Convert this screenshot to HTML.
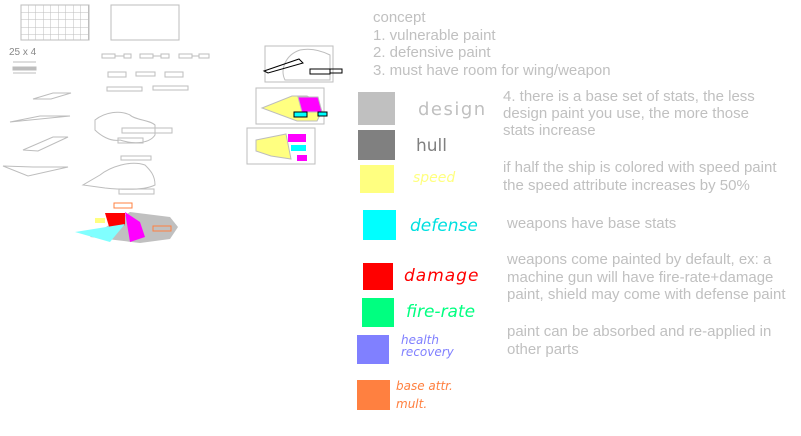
<!DOCTYPE html>
<html><head><meta charset="utf-8"><style>
body{margin:0;width:801px;height:436px;background:#fff;position:relative;overflow:hidden;font-family:"Liberation Sans",sans-serif;}
.t{position:absolute;color:#c0c0c0;font-size:15px;line-height:17.5px;white-space:nowrap}
.s{position:absolute}
.h{position:absolute;font-family:"DejaVu Sans",sans-serif;font-size:17px;font-style:italic;white-space:nowrap}
</style></head><body>
<svg width="801" height="436" style="position:absolute;left:0;top:0" fill="none" stroke="#bdbdbd" stroke-width="1">
<defs><pattern id="g" width="7.5" height="7.5" patternUnits="userSpaceOnUse" x="21" y="5"><path d="M7.5 0V7.5M0 7.5H7.5" stroke="#bdbdbd"/></pattern></defs>
<rect x="21" y="5" width="68" height="35" fill="url(#g)"/>
<rect x="111" y="5" width="68" height="35"/>
<text x="9" y="55" fill="#888" stroke="none" font-size="10" font-family="Liberation Sans">25 x 4</text>
<path d="M13 62h23M13 69h23M13 73h23"/><rect x="13" y="67" width="23" height="3" fill="#bdbdbd"/>
<g><rect x="102" y="54" width="13" height="4"/><rect x="124" y="54" width="7" height="4"/><path d="M115 56h9"/>
<rect x="140" y="54" width="13" height="4"/><rect x="161" y="54" width="8" height="4"/><path d="M153 56h8"/>
<rect x="179" y="54" width="13" height="4"/><rect x="199" y="54" width="10" height="4"/><path d="M192 56h7"/>
<rect x="108" y="72" width="18" height="5"/><rect x="136" y="72" width="19" height="4"/><rect x="165" y="72" width="18" height="5"/>
<rect x="107" y="87" width="35" height="4"/><rect x="153" y="86" width="35" height="4"/></g>
<path d="M33 99l20-6h18l-20 6zM10 122l30-6h30l-50 5zM23 150l30-13h15l-30 14zM3 166l30 1h35l-40 9z"/>
<path d="M95 120c10-8 25-10 35-5 5 5 20 5 25 10v10c-5 8-20 10-35 5-10 2-20-5-25-10zM122 128h50v5h-50zM118 138h25v5h-25z"/>
<path d="M100 175c10-8 30-15 45-10 5 5 10 10 10 20-10 5-30 5-50 3l-22-3zM121 156h30v4h-30zM119 189h35v5h-35z"/>
<rect x="265" y="46" width="68" height="36"/><path d="M285 80c-5-10 0-25 15-30 10-2 20 0 30 5v25z"/>
<rect x="256" y="88" width="68" height="36"/><path d="M262 108l30-12h15l10 5 5 10-5 10h-20z" fill="#ffff80"/>
<path d="M298 97h20l4 15h-20z" fill="#ff00ff"/><rect x="294" y="112" width="13" height="5" fill="#00ffff" stroke="#000"/><rect x="318" y="112" width="9" height="4" fill="#00ffff" stroke="#000"/>
<rect x="247" y="128" width="68" height="36"/><path d="M256 140l30-6 5 25-20-3-15-5z" fill="#ffff80"/>
<path d="M288 134h18v8h-18z" fill="#ff00ff" stroke="none"/><path d="M291 145h15v6h-15z" fill="#00ffff" stroke="none"/><path d="M297 155h10v6h-10z" fill="#ff00ff" stroke="none"/>
<path d="M264 71l35-12 4 4-35 10zM310 69h20v5h-20z" stroke="#000"/><rect x="330" y="69" width="12" height="4" stroke="#000"/>
<path d="M130 212l40 5 8 10-8 12-30 4-50-6z" fill="#c0c0c0" stroke="none"/>
<path d="M105 213h20v12l-15 5z" fill="#ff0000" stroke="none"/><path d="M125 212l15 10 5 15-15 5z" fill="#ff00ff" stroke="none"/>
<path d="M75 232l50-8-15 18z" fill="#80ffff" stroke="none"/><path d="M95 218h10v5h-10z" fill="#ffff80" stroke="none"/>
<path d="M114 203h18v5h-18zM153 226h18v5h-18z" stroke="#ff8040"/>
</svg>
<div class="t" style="left:373px;top:9px">concept<br>1. vulnerable paint<br>2. defensive paint<br>3. must have room for wing/weapon</div>
<div class="t" style="left:503px;top:88px;line-height:17px">4. there is a base set of stats, the less<br>design paint you use, the more those<br>stats increase</div>
<div class="t" style="left:503px;top:159px">if half the ship is colored with speed paint<br>the speed attribute increases by 50%</div>
<div class="t" style="left:507px;top:215px">weapons have base stats</div>
<div class="t" style="left:507px;top:251px">weapons come painted by default, ex: a<br>machine gun will have fire-rate+damage<br>paint, shield may come with defense paint</div>
<div class="t" style="left:507px;top:323px">paint can be absorbed and re-applied in<br>other parts</div>
<div class="s" style="left:358px;top:92px;width:37px;height:33px;background:#c0c0c0"></div>
<div class="s" style="left:358px;top:130px;width:37px;height:30px;background:#808080"></div>
<div class="s" style="left:360px;top:165px;width:34px;height:28px;background:#ffff80"></div>
<div class="s" style="left:363px;top:210px;width:33px;height:30px;background:#00ffff"></div>
<div class="s" style="left:363px;top:263px;width:30px;height:27px;background:#ff0000"></div>
<div class="s" style="left:362px;top:298px;width:32px;height:29px;background:#00ff80"></div>
<div class="s" style="left:357px;top:335px;width:32px;height:29px;background:#8080ff"></div>
<div class="s" style="left:357px;top:380px;width:33px;height:30px;background:#ff8040"></div>
<div class="h" style="left:418px;top:99px;color:#c0c0c0;font-size:18px;letter-spacing:1.5px;font-style:normal">design</div>
<div class="h" style="left:416px;top:136px;color:#808080;font-style:normal">hull</div>
<div class="h" style="left:413px;top:170px;color:#ffff80;font-size:14px">speed</div>
<div class="h" style="left:410px;top:216px;color:#00e0e0">defense</div>
<div class="h" style="left:404px;top:266px;color:#ff0000;letter-spacing:1px">damage</div>
<div class="h" style="left:406px;top:302px;color:#00ff80">fire-rate</div>
<div class="h" style="left:401px;top:334px;color:#8080ff;font-size:12px;line-height:12px">health<br>recovery</div>
<div class="h" style="left:396px;top:377px;color:#ff8040;font-size:12px;line-height:18px">base attr.<br>mult.</div>
</body></html>
